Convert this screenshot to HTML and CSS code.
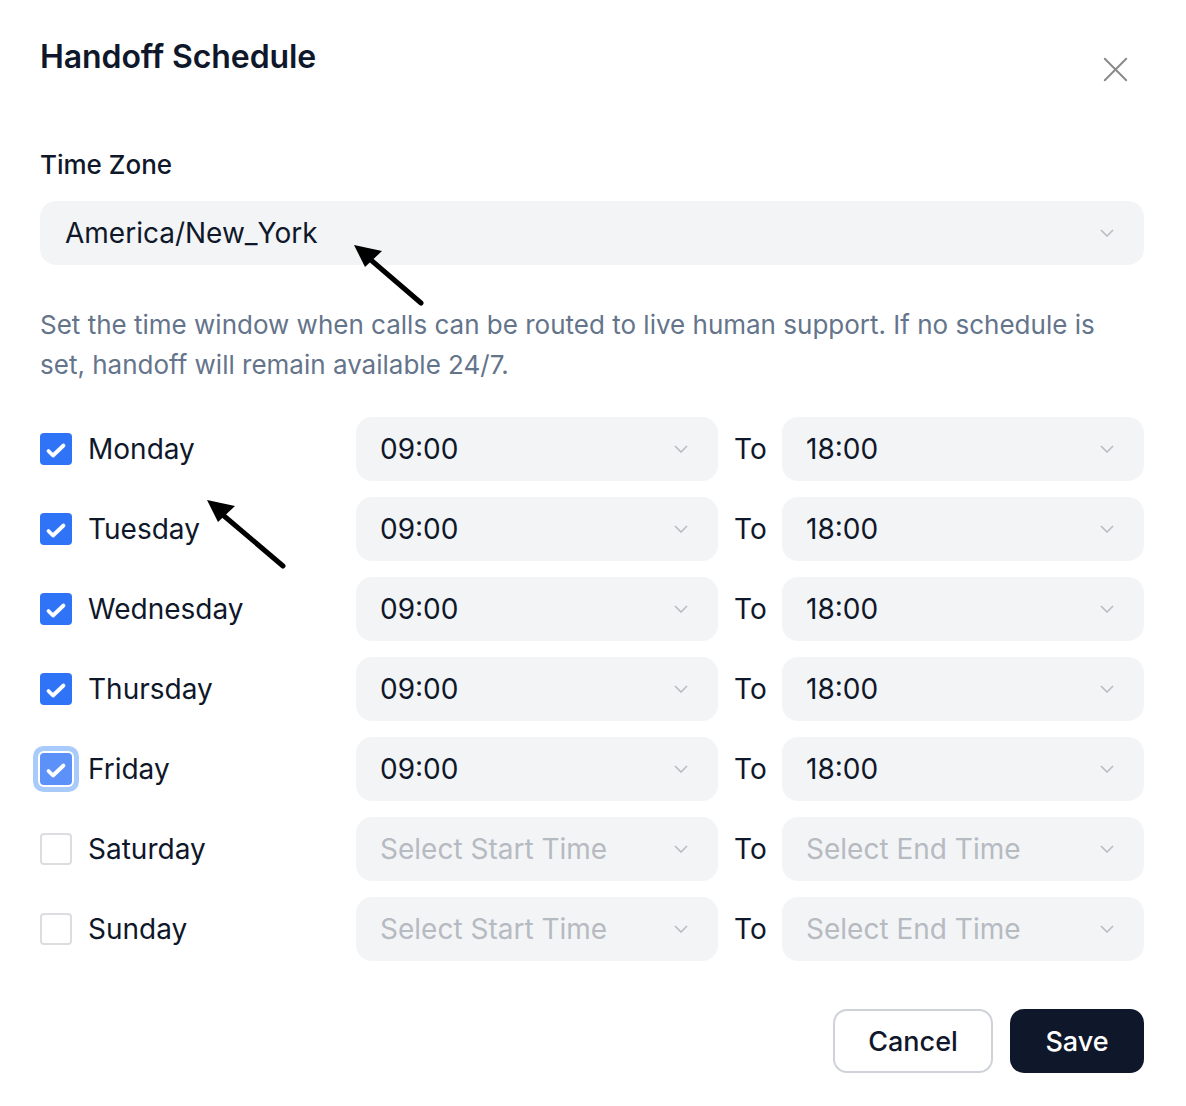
FILE: index.html
```html
<!DOCTYPE html>
<html>
<head>
<meta charset="utf-8">
<link rel="stylesheet" href="styles.css">
</head>
<body>
<div class="dialog">
  <div class="header">
    <h1 class="title">Handoff Schedule</h1>
    <button class="close" aria-label="Close">
      <svg width="28" height="28" viewBox="0 0 28 28"><path d="M2 2L26 26M26 2L2 26" stroke="#8a8a8a" stroke-width="2.2" stroke-linecap="round"/></svg>
    </button>
  </div>

  <div class="field">
    <div class="label">Time Zone</div>
    <div class="select tz">
      <span>America/New_York</span>
      <svg class="chev" width="14" height="8" viewBox="0 0 14 8"><path d="M1 1L7 7L13 1" fill="none" stroke="#b8bcc2" stroke-width="1.6"/></svg>
    </div>
  </div>

  <p class="desc">Set the time window when calls can be routed to live human support. If no schedule is set, handoff will remain available 24/7.</p>

  <div class="days">
    <div class="day"><span class="cb on"><svg viewBox="0 0 32 32"><path d="M8.5 18L13 22.5L23.5 12.5" fill="none" stroke="#fff" stroke-width="3.8" stroke-linecap="round" stroke-linejoin="round"/></svg></span><span class="dname">Monday</span></div>
    <div class="select"><span>09:00</span><svg class="chev" width="14" height="8" viewBox="0 0 14 8"><path d="M1 1L7 7L13 1" fill="none" stroke="#b8bcc2" stroke-width="1.6"/></svg></div>
    <div class="to">To</div>
    <div class="select"><span>18:00</span><svg class="chev" width="14" height="8" viewBox="0 0 14 8"><path d="M1 1L7 7L13 1" fill="none" stroke="#b8bcc2" stroke-width="1.6"/></svg></div>

    <div class="day"><span class="cb on"><svg viewBox="0 0 32 32"><path d="M8.5 18L13 22.5L23.5 12.5" fill="none" stroke="#fff" stroke-width="3.8" stroke-linecap="round" stroke-linejoin="round"/></svg></span><span class="dname">Tuesday</span></div>
    <div class="select"><span>09:00</span><svg class="chev" width="14" height="8" viewBox="0 0 14 8"><path d="M1 1L7 7L13 1" fill="none" stroke="#b8bcc2" stroke-width="1.6"/></svg></div>
    <div class="to">To</div>
    <div class="select"><span>18:00</span><svg class="chev" width="14" height="8" viewBox="0 0 14 8"><path d="M1 1L7 7L13 1" fill="none" stroke="#b8bcc2" stroke-width="1.6"/></svg></div>

    <div class="day"><span class="cb on"><svg viewBox="0 0 32 32"><path d="M8.5 18L13 22.5L23.5 12.5" fill="none" stroke="#fff" stroke-width="3.8" stroke-linecap="round" stroke-linejoin="round"/></svg></span><span class="dname">Wednesday</span></div>
    <div class="select"><span>09:00</span><svg class="chev" width="14" height="8" viewBox="0 0 14 8"><path d="M1 1L7 7L13 1" fill="none" stroke="#b8bcc2" stroke-width="1.6"/></svg></div>
    <div class="to">To</div>
    <div class="select"><span>18:00</span><svg class="chev" width="14" height="8" viewBox="0 0 14 8"><path d="M1 1L7 7L13 1" fill="none" stroke="#b8bcc2" stroke-width="1.6"/></svg></div>

    <div class="day"><span class="cb on"><svg viewBox="0 0 32 32"><path d="M8.5 18L13 22.5L23.5 12.5" fill="none" stroke="#fff" stroke-width="3.8" stroke-linecap="round" stroke-linejoin="round"/></svg></span><span class="dname">Thursday</span></div>
    <div class="select"><span>09:00</span><svg class="chev" width="14" height="8" viewBox="0 0 14 8"><path d="M1 1L7 7L13 1" fill="none" stroke="#b8bcc2" stroke-width="1.6"/></svg></div>
    <div class="to">To</div>
    <div class="select"><span>18:00</span><svg class="chev" width="14" height="8" viewBox="0 0 14 8"><path d="M1 1L7 7L13 1" fill="none" stroke="#b8bcc2" stroke-width="1.6"/></svg></div>

    <div class="day"><span class="cb on focus"><svg viewBox="0 0 32 32"><path d="M8.5 18L13 22.5L23.5 12.5" fill="none" stroke="#fff" stroke-width="3.8" stroke-linecap="round" stroke-linejoin="round"/></svg></span><span class="dname">Friday</span></div>
    <div class="select"><span>09:00</span><svg class="chev" width="14" height="8" viewBox="0 0 14 8"><path d="M1 1L7 7L13 1" fill="none" stroke="#b8bcc2" stroke-width="1.6"/></svg></div>
    <div class="to">To</div>
    <div class="select"><span>18:00</span><svg class="chev" width="14" height="8" viewBox="0 0 14 8"><path d="M1 1L7 7L13 1" fill="none" stroke="#b8bcc2" stroke-width="1.6"/></svg></div>

    <div class="day"><span class="cb"></span><span class="dname">Saturday</span></div>
    <div class="select ph"><span>Select Start Time</span><svg class="chev" width="14" height="8" viewBox="0 0 14 8"><path d="M1 1L7 7L13 1" fill="none" stroke="#b8bcc2" stroke-width="1.6"/></svg></div>
    <div class="to">To</div>
    <div class="select ph"><span>Select End Time</span><svg class="chev" width="14" height="8" viewBox="0 0 14 8"><path d="M1 1L7 7L13 1" fill="none" stroke="#b8bcc2" stroke-width="1.6"/></svg></div>

    <div class="day"><span class="cb"></span><span class="dname">Sunday</span></div>
    <div class="select ph"><span>Select Start Time</span><svg class="chev" width="14" height="8" viewBox="0 0 14 8"><path d="M1 1L7 7L13 1" fill="none" stroke="#b8bcc2" stroke-width="1.6"/></svg></div>
    <div class="to">To</div>
    <div class="select ph"><span>Select End Time</span><svg class="chev" width="14" height="8" viewBox="0 0 14 8"><path d="M1 1L7 7L13 1" fill="none" stroke="#b8bcc2" stroke-width="1.6"/></svg></div>
  </div>

  <div class="actions">
    <button class="btn cancel">Cancel</button>
    <button class="btn save">Save</button>
  </div>

  <svg class="arrow arrow1" width="90" height="80" viewBox="0 0 90 80">
    <path d="M87 76L30 27" stroke="#000" stroke-width="5" stroke-linecap="round"/>
    <path d="M20 18L48 24L31 40Z" fill="#000"/>
  </svg>
  <svg class="arrow arrow2" width="100" height="90" viewBox="0 0 100 90">
    <path d="M96 84L30 28" stroke="#000" stroke-width="5" stroke-linecap="round"/>
    <path d="M20 18L48 24L31 40Z" fill="#000"/>
  </svg>
</div>
</body>
</html>
```

FILE: styles.css
```css
* { box-sizing: border-box; }
html, body { margin: 0; padding: 0; background: #fff; }
body {
  font-family: Inter, "Noto Sans", "Liberation Sans", sans-serif;
  color: #0f172a;
}
.dialog {
  position: relative;
  width: 1186px;
  height: 1106px;
  padding: 37px 42px 0 40px;
}
.header {
  display: flex;
  justify-content: space-between;
  align-items: flex-start;
}
.title {
  margin: 0;
  font-size: 32px;
  font-weight: 600;
  line-height: 40px;
  color: #0f172a;
  letter-spacing: -0.1px;
}
.close {
  border: 0;
  background: none;
  padding: 0;
  margin: 18px 15px 0 0;
  width: 28px;
  height: 28px;
  display: flex;
  align-items: center;
  justify-content: center;
}
.close svg { width: 25px; height: 25px; }
.field { margin-top: 64px; }
.label {
  font-size: 26px;
  font-weight: 500;
  line-height: 36px;
}
.select {
  height: 64px;
  background: #f3f4f6;
  border-radius: 16px;
  display: flex;
  align-items: center;
  justify-content: space-between;
  padding: 0 30px 0 24px;
  font-size: 28px;
  line-height: 36px;
}
.tz { margin-top: 18px; padding-left: 25px; padding-right: 30px; }
.select.ph { color: #b6bac1; }
.chev { flex: none; }
.desc {
  margin: 40px 0 0;
  font-size: 26px;
  line-height: 40px;
  color: #64748b;
}
.days {
  margin-top: 32px;
  display: grid;
  grid-template-columns: 300px 362px 32px 362px;
  column-gap: 16px;
  row-gap: 16px;
  align-items: center;
}
.day {
  display: flex;
  align-items: center;
  gap: 16px;
}
.cb {
  width: 32px;
  height: 32px;
  border-radius: 4px;
  border: 2px solid #dcdde1;
  background: #fff;
  flex: none;
  display: flex;
}
.cb svg { width: 100%; height: 100%; }
.cb.on {
  border: 0;
  background: #2f74f6;
}
.cb.focus {
  background: #5b91f8;
  box-shadow: 0 0 0 2px #fff, 0 0 0 7px #a9cbfb;
}
.dname {
  font-size: 28px;
  line-height: 36px;
}
.to {
  font-size: 28px;
  line-height: 36px;
  text-align: center;
}
.actions {
  margin-top: 48px;
  display: flex;
  justify-content: flex-end;
  gap: 17px;
}
.btn {
  height: 64px;
  border-radius: 14px;
  font-family: inherit;
  font-size: 27px;
  font-weight: 500;
  padding: 0 32px;
}
.cancel {
  background: #fff;
  border: 2px solid #cfd3d9;
  color: #0f172a;
  width: 160px;
}
.save {
  background: #0f172a;
  border: 0;
  color: #fff;
  width: 134px;
}
.arrow { position: absolute; }
.arrow1 { left: 334px; top: 227px; }
.arrow2 { left: 187px; top: 482px; }
```
